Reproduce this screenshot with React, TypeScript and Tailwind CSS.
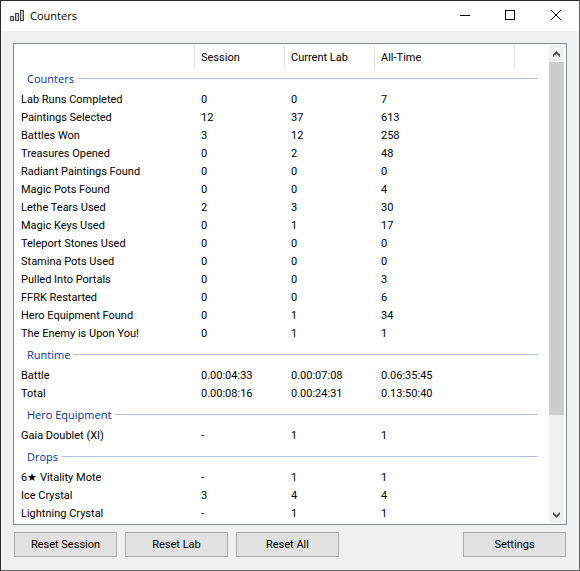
import React from "react";

type Row = [string, string, string, string];

const groups: { title: string; rows: Row[] }[] = [
  {
    title: "Counters",
    rows: [
      ["Lab Runs Completed", "0", "0", "7"],
      ["Paintings Selected", "12", "37", "613"],
      ["Battles Won", "3", "12", "258"],
      ["Treasures Opened", "0", "2", "48"],
      ["Radiant Paintings Found", "0", "0", "0"],
      ["Magic Pots Found", "0", "0", "4"],
      ["Lethe Tears Used", "2", "3", "30"],
      ["Magic Keys Used", "0", "1", "17"],
      ["Teleport Stones Used", "0", "0", "0"],
      ["Stamina Pots Used", "0", "0", "0"],
      ["Pulled Into Portals", "0", "0", "3"],
      ["FFRK Restarted", "0", "0", "6"],
      ["Hero Equipment Found", "0", "1", "34"],
      ["The Enemy is Upon You!", "0", "1", "1"],
    ],
  },
  {
    title: "Runtime",
    rows: [
      ["Battle", "0.00:04:33", "0.00:07:08", "0.06:35:45"],
      ["Total", "0.00:08:16", "0.00:24:31", "0.13:50:40"],
    ],
  },
  { title: "Hero Equipment", rows: [["Gaia Doublet (XI)", "-", "1", "1"]] },
  {
    title: "Drops",
    rows: [
      ["6★ Vitality Mote", "-", "1", "1"],
      ["Ice Crystal", "3", "4", "4"],
      ["Lightning Crystal", "-", "1", "1"],
    ],
  },
];

function TitleBar() {
  return (
    <header className="flex h-[30px] items-center bg-white pl-[9px]">
      <svg width="14" height="12" viewBox="0 0 14 12" fill="#c8c8c8" stroke="#444444" shapeRendering="crispEdges" aria-hidden="true">
        <rect x="0.5" y="6.5" width="3" height="4" />
        <rect x="5.5" y="3.5" width="3" height="7" />
        <rect x="10.5" y="0.5" width="3" height="10" />
      </svg>
      <h1 className="ml-[6px] flex-1 font-['Open_Sans',sans-serif] text-[11px] leading-4">Counters</h1>
      <button aria-label="Minimize" className="flex h-full w-11 items-center justify-center pb-[2px]">
        <svg width="10" height="10" viewBox="0 0 10 10" stroke="#000" shapeRendering="crispEdges"><path d="M0 5.5H10" /></svg>
      </button>
      <button aria-label="Maximize" className="flex h-full w-[46px] items-center justify-center pb-[2px]">
        <svg width="10" height="10" viewBox="0 0 10 10" fill="none" stroke="#000" shapeRendering="crispEdges"><rect x="0.5" y="0.5" width="9" height="9" /></svg>
      </button>
      <button aria-label="Close" className="flex h-full w-[46px] items-center justify-center pb-[2px]">
        <svg width="10" height="10" viewBox="0 0 10 10" stroke="#000"><path d="M0 0L10 10M10 0L0 10" /></svg>
      </button>
    </header>
  );
}

function CounterTable() {
  return (
    <table className="w-full table-fixed border-separate border-spacing-0 text-left">
      <colgroup>
        <col className="w-[181px]" />
        <col className="w-[90px]" />
        <col className="w-[90px]" />
        <col className="w-[140px]" />
        <col />
      </colgroup>
      <thead>
        <tr className="h-6">
          <td className="border-r border-[#e5e5e5] p-0" />
          {["Session", "Current Lab", "All-Time"].map((h) => (
            <th key={h} scope="col" className="border-r border-[#e5e5e5] pt-[2px] pr-0 pb-0 pl-[6px] font-normal">{h}</th>
          ))}
          <td className="p-0" />
        </tr>
      </thead>
      {groups.map((g, i) => (
        <tbody key={g.title}>
          <tr>
            <th colSpan={5} scope="rowgroup" className={`pr-[11px] pb-[2px] pl-[13px] font-normal ${i > 0 ? "pt-[3px]" : "pt-0"}`}>
              <div className="flex h-[19px] items-center gap-1 font-['Open_Sans',sans-serif] text-[11px] text-[#003399]">
                <span>{g.title}</span>
                <span className="h-px flex-1 bg-[#b0bfe0]" />
              </div>
            </th>
          </tr>
          {g.rows.map(([name, ...values]) => (
            <tr key={name} className="h-[18px]">
              <th scope="row" className="pt-[2px] pr-0 pb-0 pl-[7px] font-normal whitespace-nowrap">{name}</th>
              {values.map((v, k) => (
                <td key={k} className="pt-[2px] pr-0 pb-0 pl-[6px]">{v}</td>
              ))}
              <td className="p-0" />
            </tr>
          ))}
        </tbody>
      ))}
    </table>
  );
}

function ScrollBar() {
  return (
    <div className="flex w-[15px] shrink-0 flex-col bg-[#f0f0f0]">
      <button aria-label="Scroll up" className="flex h-[17px] items-center justify-center">
        <svg width="7" height="6" viewBox="0 0 7 6" fill="#505050"><path d="M3.5 0L7 3.5V6L3.5 2.8L0 6V3.5Z" /></svg>
      </button>
      <div className="flex-1">
        <div className="h-[79.6%] bg-[#cdcdcd]" />
      </div>
      <button aria-label="Scroll down" className="flex h-[17px] items-center justify-center">
        <svg width="7" height="6" viewBox="0 0 7 6" fill="#505050"><path d="M3.5 6L7 2.5V0L3.5 3.2L0 0V2.5Z" /></svg>
      </button>
    </div>
  );
}

function PushButton({ children }: { children: React.ReactNode }) {
  return (
    <button className="h-[25px] w-[103px] border border-[#adadad] bg-[#e1e1e1] leading-4">{children}</button>
  );
}

export default function App() {
  return (
    <div className="flex min-h-screen flex-col border border-t-[#2b2b2b] border-r-[#666666] border-b-[#666666] border-l-[#2b2b2b] bg-[#f0f0f0] font-[Roboto,'Liberation_Sans',sans-serif] text-[11px] leading-4 text-black">
      <TitleBar />
      <main className="flex flex-1 flex-col gap-[7px] p-3 pb-[13px]">
        <div className="flex flex-1 border border-[#828790] bg-white pt-px pr-[2px] pb-px">
          <div className="min-w-0 flex-1">
            <CounterTable />
          </div>
          <ScrollBar />
        </div>
        <div className="flex gap-2 px-px">
          <PushButton>Reset Session</PushButton>
          <PushButton>Reset Lab</PushButton>
          <PushButton>Reset All</PushButton>
          <div className="ml-auto flex">
            <PushButton>Settings</PushButton>
          </div>
        </div>
      </main>
    </div>
  );
}
